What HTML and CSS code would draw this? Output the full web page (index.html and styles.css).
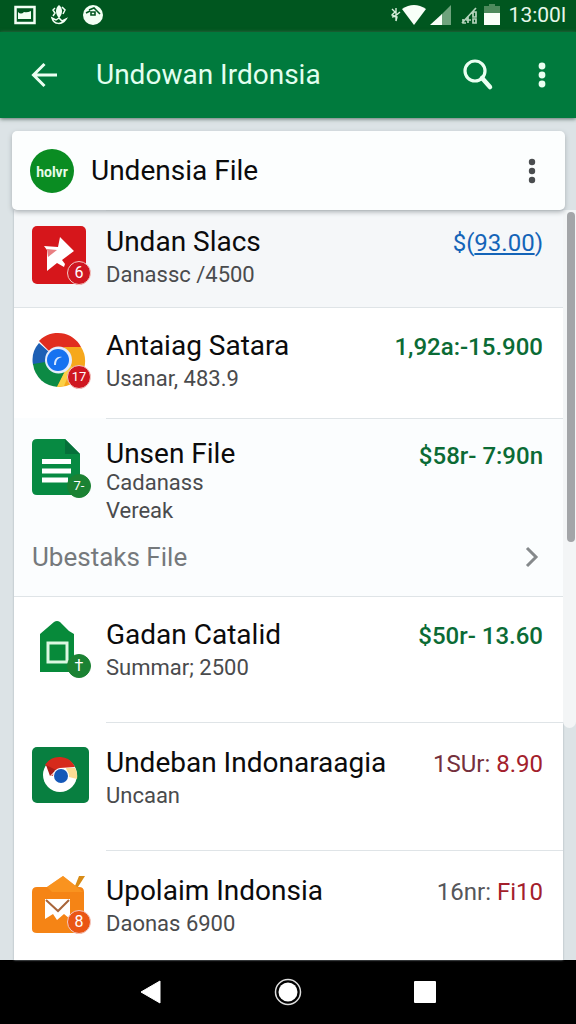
FILE: index.html
```html
<!DOCTYPE html>
<html lang="id">
<head>
	<meta charset="utf-8">
	<meta name="viewport" content="width=device-width, initial-scale=1">
	<title>Undowan Irdonsia</title>
	<link rel="stylesheet" href="styles.css">
</head>
<body>

	<div class="statusbar">
		<svg width="22" height="20" viewBox="0 0 22 20">
			<rect x="1.5" y="2" width="19" height="16" fill="none" stroke="#f2fff4" stroke-width="2.5"/>
			<path d="M4 14V7q3 3 6 0 3 1 7-1v8z" fill="#f2fff4"/>
		</svg>
		<svg width="18" height="22" viewBox="0 0 18 22">
			<path d="M9 1c4 3 4 9 0 13c-4-4-4-10 0-13z" fill="#f2fff4"/>
			<path d="M5 4L3 6l2 3-2 3M12 3l3 3-2 4M2 14c2 7 10 7 14 1l-4 2-3-3-3 2z" fill="none" stroke="#f2fff4" stroke-width="1.500"/>
		</svg>
		<svg width="22" height="22" viewBox="0 0 22 22">
			<circle cx="11" cy="11" r="10" fill="#f2fff4"/>
			<path d="M4 9l4-2M7 6l5-2 3 3 3 3M9 8h4v3H9z" fill="none" stroke="#00561f" stroke-width="1.600"/>
		</svg>
		<span class="space"></span>
		<svg width="10" height="18" viewBox="0 0 10 18">
			<path d="M1 3l3 3-3 3 5 2-1 4M5 2v13M9 6L3 11M1 11l4-1" fill="none" stroke="#d8efdc" stroke-width="1.4"/>
		</svg>
		<svg class="wifi" width="24" height="22" viewBox="0 0 24 22">
			<path d="M0 5Q12-3 24 5L12 21z" fill="#f8fff8"/>
		</svg>
		<svg class="signal" width="22" height="22" viewBox="0 0 22 22">
			<path d="M21 1v20H11V11z" fill="#6ea37c"/>
			<path d="M0 21L12 10v11z" fill="#f8fff8"/>
		</svg>
		<svg class="signal2" width="17" height="20" viewBox="0 0 17 20">
			<path d="M1 18L15 3M2 14v4h3M7 11v7M5 15h5M12 7h3v5h-3zM12 14h3v4h-3z" fill="none" stroke="#b5d4bc" stroke-width="1.7"/>
		</svg>
		<svg class="battery" width="16" height="23" viewBox="0 0 16 23">
			<path d="M5 1h6v2h5v8H0V3h5z" fill="#4d8a5c"/>
			<path d="M0 10h16v12H0z" fill="#f8fff8"/>
		</svg>
		<span class="clock">13:00l</span>
	</div>

	<header class="toolbar">
		<button class="icon_btn" aria-label="Kembali">
			<svg width="26" height="26" viewBox="0 0 26 26" fill="none" stroke="#eafff2" stroke-width="3">
				<path d="M13.500 2L2.500 13l11 11M3 13h23"/>
			</svg>
		</button>
		<h1>Undowan Irdonsia</h1>
		<button class="icon_btn search" aria-label="Cari">
			<svg width="32" height="32" viewBox="0 0 32 32" fill="none" stroke="#eafff2">
				<circle cx="13" cy="12" r="10" stroke-width="3.200"/>
				<path d="M20 19l8 9" stroke-width="4.500" stroke-linecap="round"/>
			</svg>
		</button>
		<button class="icon_btn" aria-label="Menu">
			<svg width="8" height="28" viewBox="0 0 8 28" fill="#eafff2">
				<circle cx="4" cy="5" r="3.400"/><circle cx="4" cy="14" r="3.400"/><circle cx="4" cy="23" r="3.400"/>
			</svg>
		</button>
	</header>

	<main>
		<section class="card">
			<span class="avatar">holvr</span>
			<h2>Undensia File</h2>
			<button class="icon_btn" aria-label="Opsi">
				<svg width="8" height="28" viewBox="0 0 8 28" fill="#4a4d4f">
					<circle cx="4" cy="5" r="3.200"/><circle cx="4" cy="14" r="3.200"/><circle cx="4" cy="23" r="3.200"/>
				</svg>
			</button>
		</section>

		<ul class="list">
			<li class="row first">
				<div class="icon">
					<svg width="58" height="58" viewBox="0 0 58 58">
						<rect width="54" height="58" rx="5" fill="#d6161b"/>
						<path d="M12 20l14 1 2-10 14 14-12 9 3 4-1 3-7-4-10 8V24z" fill="#fff"/>
						<path d="M15 23l10 1-9 7z" fill="#d6161b" opacity=".55"/>
					</svg>
					<span class="badge red">6</span>
				</div>
				<div class="text">
					<h3>Undan Slacs</h3>
					<p>Danassc /4500</p>
				</div>
				<a class="amount blue" href="#">$(<u>93.00</u>)</a>
			</li>

			<li class="row line_full">
				<div class="icon">
					<svg width="58" height="58" viewBox="0 0 58 58">
						<path d="M26 30L7 11A26 26 0 0 1 49 17L40 20z" fill="#e12d1f"/>
						<path d="M26 30L7 13A26 26 0 0 0 1 35L20 38z" fill="#1d5fb4"/>
						<path d="M26 30L1 34A26 26 0 0 0 26 57L35 38z" fill="#0c8a44"/>
						<path d="M32 17h17A26 26 0 0 1 25 57L36 36z" fill="#f6a81c"/>
						<path d="M25 57L37 33l3 4-8 19z" fill="#fbd046"/>
						<circle cx="26.500" cy="30" r="13.500" fill="#e4ecfb"/>
						<circle cx="26" cy="30" r="11" fill="#1672f0"/>
						<path d="M22 35c0-6 3-9 8-8-4 1-6 3-6 8z" fill="#d7e8ff"/>
					</svg>
					<span class="badge red small">17</span>
				</div>
				<div class="text">
					<h3>Antaiag Satara</h3>
					<p>Usanar, 483.9</p>
				</div>
				<span class="amount green">1,92a:-15.900</span>
			</li>

			<li class="row shade">
				<div class="icon">
					<svg width="58" height="58" viewBox="0 0 58 58">
						<path d="M5 0h28l15 15v36q0 5-5 5H5q-5 0-5-5V5q0-5 5-5z" fill="#078a42"/>
						<path d="M33 0l15 15H33z" fill="#05703a"/>
						<path d="M10 22.500h29M10 32h29M10 41h26" stroke="#fff" stroke-width="5"/>
					</svg>
					<span class="badge green_bg small">7-</span>
				</div>
				<div class="text tight">
					<h3>Unsen File</h3>
					<p>Cadanass<br>Vereak</p>
				</div>
				<span class="amount green">$58r- 7:90n</span>
			</li>

			<li class="more">
				<a href="#">
					<span>Ubestaks File</span>
					<svg width="14" height="22" viewBox="0 0 14 22" fill="none" stroke="#85898b" stroke-width="3">
						<path d="M2 2l9 9-9 9"/>
					</svg>
				</a>
			</li>

			<li class="row tall line_full">
				<div class="icon">
					<svg width="58" height="58" viewBox="0 0 58 58">
						<path d="M22 3q3-2 6 0l9 9 5 3v38H8V15z" fill="#078a3a"/>
						<rect x="16" y="24" width="19" height="19" fill="#078a3a" stroke="#dcf8e2" stroke-width="3"/>
					</svg>
					<span class="badge green_bg">†</span>
				</div>
				<div class="text">
					<h3>Gadan Catalid</h3>
					<p>Summar; 2500</p>
				</div>
				<span class="amount green">$50r- 13.60</span>
			</li>

			<li class="row tall low">
				<div class="icon">
					<svg width="58" height="58" viewBox="0 0 58 58">
						<rect width="57" height="56" rx="5" fill="#087f40"/>
						<circle cx="28" cy="28" r="17" fill="#fff"/>
						<path d="M28 28L13 18A17 17 0 0 1 43 20l-15 1-9 8z" fill="#d62a1c"/>
						<path d="M18 29l-4-11 10 5z" fill="#a91c17"/>
						<path d="M34 21h9q3 5 2 11l-8-2z" fill="#fbdc94"/>
						<circle cx="29" cy="29" r="8" fill="#fff"/>
						<circle cx="29" cy="29" r="7" fill="#1458b8"/>
					</svg>
				</div>
				<div class="text">
					<h3>Undeban Indonaraagia</h3>
					<p>Uncaan</p>
				</div>
				<span class="amount"><span class="dark_red">1SUr:</span> <span class="red_text">8.90</span></span>
			</li>

			<li class="row last low">
				<div class="icon">
					<svg width="58" height="58" viewBox="0 0 58 58">
						<path d="M43 11l4-10h6L44 15z" fill="#d88b16"/>
						<path d="M5 12h10L31 1l14 11h2q5 0 5 5v37q0 4-5 4H5q-5 0-5-4V17q0-5 5-5z" fill="#f58415"/>
						<path d="M15 12L31 1l14 11 6 5H20z" fill="#fb9a24" opacity=".7"/>
						<path d="M13 24h25v20l-6-5-7 6-4-6-8 5z" fill="#fff"/>
						<path d="M14 25l12 11 11-11" fill="none" stroke="#a8653a" stroke-width="2"/>
					</svg>
					<span class="badge orange">8</span>
				</div>
				<div class="text">
					<h3>Upolaim Indonsia</h3>
					<p>Daonas 6900</p>
				</div>
				<span class="amount"><span class="gray">16nr:</span> <span class="red_text">Fi10</span></span>
			</li>
		</ul>

		<div class="scrollbar"><div class="thumb"></div></div>
	</main>

	<nav class="navbar">
		<button aria-label="Kembali">
			<svg width="28" height="28" viewBox="0 0 28 28"><path d="M4 14L23 3v22z" fill="#fff" stroke="#fff" stroke-width="1" stroke-linejoin="round"/></svg>
		</button>
		<button aria-label="Beranda">
			<svg width="28" height="28" viewBox="0 0 28 28"><circle cx="14" cy="14" r="12.500" fill="none" stroke="#ddd" stroke-width="1.500"/><circle cx="14" cy="14" r="9.500" fill="#fff"/></svg>
		</button>
		<button aria-label="Terbaru">
			<svg width="28" height="28" viewBox="0 0 28 28"><rect x="3" y="3" width="22" height="22" rx="1" fill="#fff"/></svg>
		</button>
	</nav>

</body>
</html>
```
FILE: styles.css
```css
* {
	box-sizing: border-box;
}

body {
	margin: 0;
	min-height: 100vh;
	display: flex;
	flex-direction: column;
	background-color: #dce3e6;
	font-family: Roboto, "Liberation Sans", sans-serif;
	color: #0b0b0c;
}

h1, h2, h3, p, ul {
	margin: 0;
	padding: 0;
	font-weight: normal;
}

button {
	border: 0;
	padding: 0;
	background: none;
	cursor: pointer;
}

svg {
	display: block;
	flex: none;
}

/* status bar */
.statusbar {
	flex: none;
	height: 32px;
	display: flex;
	align-items: center;
	gap: 14px;
	padding: 0 10px 3px 14px;
	background-color: #00561f;
}

.space {
	flex: 1;
}

.wifi {
	margin-left: -13px;
}

.signal {
	margin-left: -10px;
}

.signal2 {
	margin-left: -5px;
}

.battery {
	margin-left: -8px;
}

.clock {
	margin-left: -5px;
	font-size: 21px;
	line-height: 28px;
	color: #e6f7ea;
}

/* green toolbar */
.toolbar {
	flex: none;
	position: relative;
	z-index: 2;
	height: 86px;
	display: flex;
	align-items: center;
	padding: 0 18px 0 16px;
	background-color: #007a3d;
	box-shadow: 0 1px 4px #5b7069;
}

.icon_btn {
	display: flex;
	align-items: center;
	justify-content: center;
	width: 32px;
	height: 48px;
}

.toolbar .icon_btn:first-child {
	width: 56px;
}

.toolbar h1 {
	flex: 1;
	margin-left: 24px;
	font-size: 28px;
	line-height: 34px;
	color: #e2fff0;
}

.toolbar .search {
	margin-right: 32px;
}

/* content */
main {
	flex: 1;
	position: relative;
	display: flex;
	flex-direction: column;
	padding-top: 13px;
}

.card {
	position: relative;
	z-index: 1;
	height: 79px;
	display: flex;
	align-items: center;
	margin: 0 11px 0 12px;
	padding: 0 17px 0 18px;
	background-color: #fcfefe;
	border-radius: 5px;
	box-shadow: 0 2px 5px #a9afb3;
}

.card h2 {
	flex: 1;
	margin-left: 17px;
	font-size: 28px;
	line-height: 34px;
}

.avatar {
	width: 44px;
	height: 44px;
	border-radius: 50%;
	background-color: #0a8c22;
	color: #e8fbe8;
	font-size: 14px;
	font-weight: bold;
	line-height: 46px;
	text-align: center;
}

.list {
	flex: 1;
	display: flex;
	flex-direction: column;
	margin: 0 13px 0 14px;
	list-style: none;
	background-color: #fff;
	box-shadow: 0 0 2px #a4adb3;
}

.row {
	position: relative;
	display: flex;
	align-items: flex-start;
	padding: 22px 20px 23px 18px;
}

.row.first {
	padding-top: 15px;
	padding-bottom: 16px;
	background-color: #f5f7f9;
}

.row.shade {
	padding-top: 20px;
	padding-bottom: 0;
	background-color: #fbfdfe;
}

.row.tall {
	padding-bottom: 38px;
}

.row.low {
	padding-top: 24px;
}

.row.last {
	flex: 1;
	padding-bottom: 16px;
}

/* divider starts at the text, or runs over the whole width */
.row::before {
	content: "";
	position: absolute;
	top: 0;
	left: 92px;
	right: 0;
	height: 1px;
	background-color: #dfe4e7;
}

.row.line_full::before {
	left: 0;
}

.icon {
	position: relative;
	width: 58px;
	height: 58px;
	margin-top: 1px;
}

.badge {
	position: absolute;
	left: 35px;
	top: 35px;
	width: 24px;
	height: 24px;
	border: 1px solid #f3c9c4;
	border-radius: 50%;
	color: #fff;
	font-size: 16px;
	line-height: 22px;
	text-align: center;
}

.badge.small {
	font-size: 13px;
}

.red {
	background-color: #cf1720;
}

.green_bg {
	border-color: #1b8233;
	background-color: #1b8233;
}

.orange {
	background-color: #ea5614;
}

.text {
	flex: 1;
	margin-left: 16px;
}

.text h3 {
	font-size: 28px;
	line-height: 34px;
}

.text p {
	font-size: 22px;
	line-height: 32px;
	color: #4a4b4d;
}

.text.tight h3 {
	line-height: 31px;
}

.text.tight p {
	line-height: 28px;
}

.amount {
	font-size: 24px;
	line-height: 36px;
	white-space: nowrap;
	text-decoration: none;
}

.blue {
	color: #1464b8;
}

.green {
	color: #0b6b35;
	font-weight: 500;
}

.dark_red {
	color: #74303c;
}

.red_text {
	color: #a3202b;
}

.gray {
	color: #55565a;
}

.more a {
	display: flex;
	align-items: center;
	justify-content: space-between;
	padding: 15px 24px 22px 18px;
	background-color: #fbfdfe;
	font-size: 26px;
	line-height: 34px;
	color: #75797c;
	text-decoration: none;
}

/* scrollbar lies over the right margin */
.scrollbar {
	position: absolute;
	top: 92px;
	right: 0;
	bottom: 232px;
	width: 13px;
	padding: 2px 1px 0 4px;
	border-radius: 0 0 7px 7px;
	background-color: #f3f5f6;
}

.thumb {
	height: 64%;
	border-radius: 4px;
	background-color: #a3a5a8;
}

/* system buttons */
.navbar {
	flex: none;
	height: 64px;
	display: flex;
	align-items: center;
	justify-content: center;
	gap: 109px;
	background-color: #000;
}
```
